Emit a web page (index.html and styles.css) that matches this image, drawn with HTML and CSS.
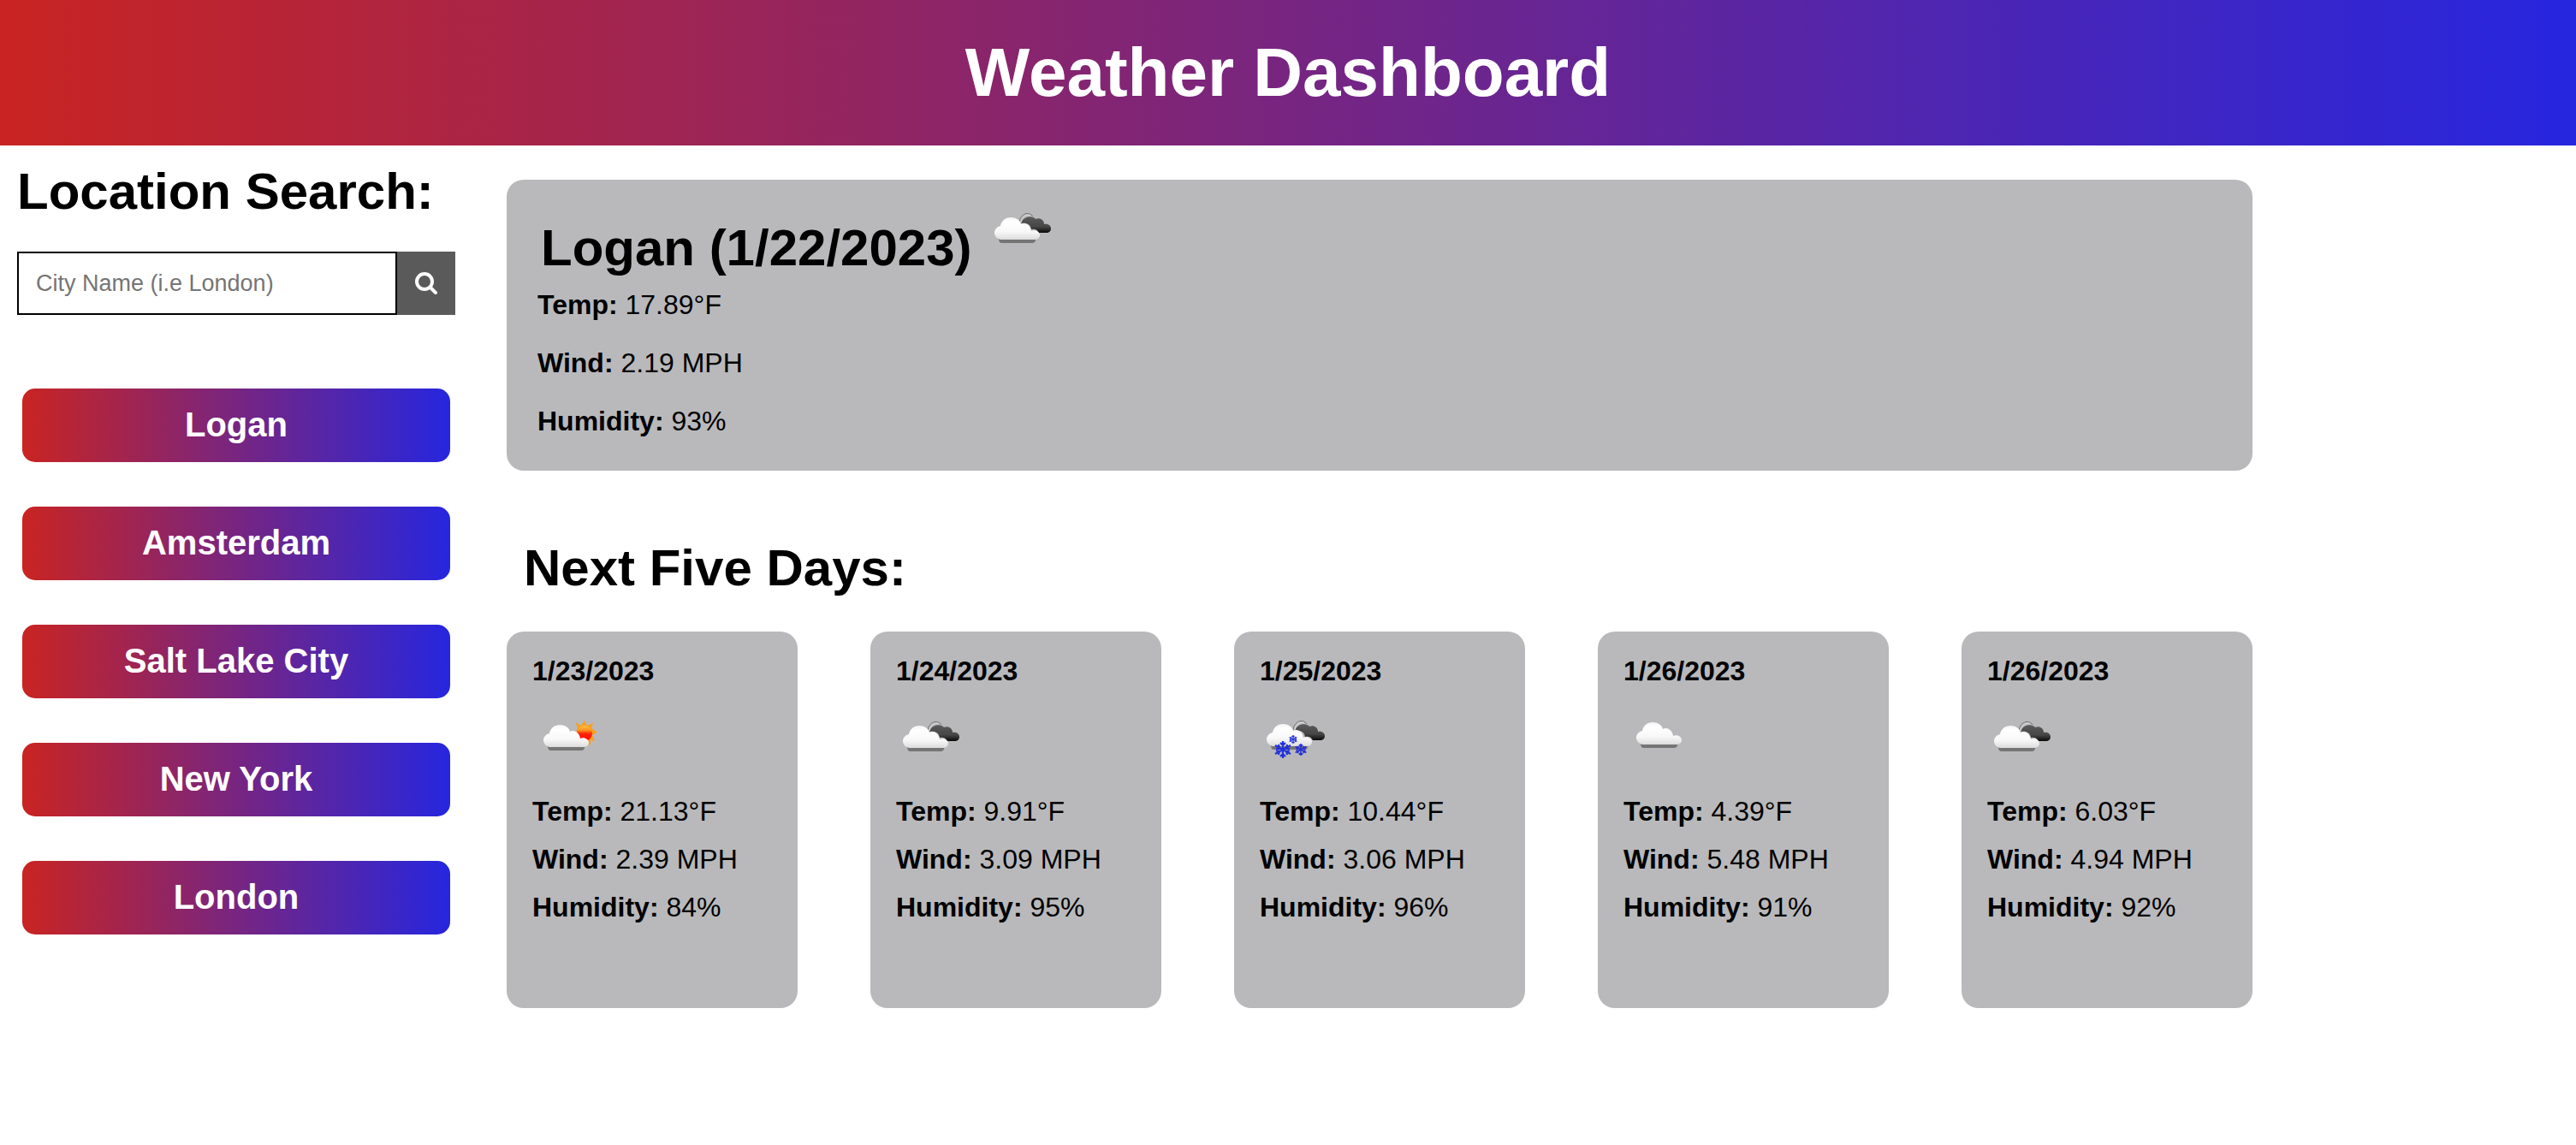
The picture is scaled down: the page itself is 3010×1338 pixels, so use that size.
FILE: index.html
```html
<!DOCTYPE html>
<html lang="en">
<head>
<meta charset="utf-8">
<meta name="viewport" content="width=device-width, initial-scale=1">
<title>Weather Dashboard</title>
<link rel="stylesheet" href="styles.css">
</head>
<body>
<svg class="sprite" aria-hidden="true">
  <defs>
    <linearGradient id="white-fill" x1="0" y1="0" x2="0" y2="1">
      <stop offset="0" stop-color="#f4f4f4"/>
      <stop offset=".2" stop-color="#fff"/>
      <stop offset=".65" stop-color="#f8f8f8"/>
      <stop offset="1" stop-color="#dcdcdc"/>
    </linearGradient>
    <linearGradient id="dark-fill" x1="0" y1="0" x2="0" y2="1">
      <stop offset="0" stop-color="#5a5a5a"/>
      <stop offset=".6" stop-color="#474747"/>
      <stop offset="1" stop-color="#0c0c0c"/>
    </linearGradient>
    <linearGradient id="sun-fill" x1="0" y1="0" x2="0" y2="1">
      <stop offset="0" stop-color="#ffc04a"/>
      <stop offset=".3" stop-color="#ff9020"/>
      <stop offset=".5" stop-color="#ff2a08"/>
      <stop offset="1" stop-color="#f00"/>
    </linearGradient>
    <filter id="soft" x="-10%" y="-10%" width="120%" height="120%">
      <feGaussianBlur stdDeviation=".6"/>
    </filter>
    <g id="white-cloud">
      <path d="M4 24H50L47 30Q46 31 44 31H9Q7 31 6 30Z" fill="#747474"/>
      <path d="M7 27C3 26 0 23 0 19C0 15 3 12 7 11C8 5 13 1 19 1C25 1 30 4 31 9C36 6 42 10 43 17C48 15 53 18 53 22C53 25 50 27 47 27Z" fill="url(#white-fill)"/>
    </g>
    <g id="dark-cloud">
      <path d="M31 12C33 4 44 2 48 7C52 5 58 7 58 13C63 12 66 15 66 18C66 21 64 23 60 23H52C50 19 47 18 43 19C42 13 38 11 31 12Z" fill="url(#dark-fill)"/>
      <path d="M29 11C30 1 40-3 45 4" fill="none" stroke="#727272" stroke-width="1"/>
      <path d="M31 11C32 4 37 1 42 3" fill="none" stroke="#dcdcdc" stroke-width="1"/>
    </g>
    <g id="flake" stroke="#2430d8" stroke-width="2.200" fill="none">
      <path d="M0-10V10M-9-5L9 5M-9 5L9-5M-3-8L0-5L3-8M-3 8L0 5L3 8M-8-1L-4-2L-5-6M8 1L4 2L5 6M-8 1L-4 2L-5 6M8-1L4-2L5-6"/>
    </g>
    <symbol id="broken-clouds" viewBox="0 0 100 100">
      <g filter="url(#soft)">
        <use href="#dark-cloud" transform="translate(8 31)"/>
        <use href="#white-cloud" transform="translate(8 35)"/>
      </g>
    </symbol>
    <symbol id="few-clouds" viewBox="0 0 100 100">
      <g filter="url(#soft)">
        <path d="M61 30L64 36L71 33L69 39L76 44L70 47L73 54L68 53L68 59L55 52L51 44L53 38L50 32L57 36Z" fill="#f9a01f"/>
        <circle cx="61" cy="45" r="9" fill="url(#sun-fill)"/>
        <use href="#white-cloud" transform="translate(13 34)"/>
      </g>
    </symbol>
    <symbol id="scattered-clouds" viewBox="0 0 100 100">
      <use href="#white-cloud" transform="translate(15 31)" filter="url(#soft)"/>
    </symbol>
    <symbol id="snow" viewBox="0 0 100 100">
      <g filter="url(#soft)">
        <use href="#dark-cloud" transform="translate(10 30)"/>
        <use href="#white-cloud" transform="translate(8 33)"/>
        <use href="#flake" transform="translate(27 64)"/>
        <use href="#flake" transform="translate(39 52) scale(.5)"/>
        <use href="#flake" transform="translate(48 64) scale(.7)"/>
      </g>
    </symbol>
  </defs>
</svg>

<header class="banner"><h1>Weather Dashboard</h1></header>

<div class="page">
  <aside class="sidebar">
    <h2><label for="city">Location Search:</label></h2>
    <form class="search">
      <input id="city" type="text" placeholder="City Name (i.e London)">
      <button type="submit" aria-label="Search">
        <svg viewBox="0 0 26 26" aria-hidden="true"><circle cx="11" cy="11" r="9"/><path d="M18 18L24 24"/></svg>
      </button>
    </form>
    <div class="history">
      <button type="button">Logan</button>
      <button type="button">Amsterdam</button>
      <button type="button">Salt Lake City</button>
      <button type="button">New York</button>
      <button type="button">London</button>
    </div>
  </aside>

  <main class="weather">
    <section class="current">
      <div class="current-head">
        <h2>Logan (1/22/2023)</h2>
        <svg class="icon" role="img" aria-label="Broken clouds"><use href="#broken-clouds"/></svg>
      </div>
      <p><b>Temp:</b> 17.89°F</p>
      <p><b>Wind:</b> 2.19 MPH</p>
      <p><b>Humidity:</b> 93%</p>
    </section>

    <h2 class="forecast-title">Next Five Days:</h2>
    <section class="forecast">
      <article class="day">
        <h3>1/23/2023</h3>
        <svg class="icon" role="img" aria-label="Few clouds"><use href="#few-clouds"/></svg>
        <p><b>Temp:</b> 21.13°F</p>
        <p><b>Wind:</b> 2.39 MPH</p>
        <p><b>Humidity:</b> 84%</p>
      </article>
      <article class="day">
        <h3>1/24/2023</h3>
        <svg class="icon" role="img" aria-label="Broken clouds"><use href="#broken-clouds"/></svg>
        <p><b>Temp:</b> 9.91°F</p>
        <p><b>Wind:</b> 3.09 MPH</p>
        <p><b>Humidity:</b> 95%</p>
      </article>
      <article class="day">
        <h3>1/25/2023</h3>
        <svg class="icon" role="img" aria-label="Snow"><use href="#snow"/></svg>
        <p><b>Temp:</b> 10.44°F</p>
        <p><b>Wind:</b> 3.06 MPH</p>
        <p><b>Humidity:</b> 96%</p>
      </article>
      <article class="day">
        <h3>1/26/2023</h3>
        <svg class="icon" role="img" aria-label="Scattered clouds"><use href="#scattered-clouds"/></svg>
        <p><b>Temp:</b> 4.39°F</p>
        <p><b>Wind:</b> 5.48 MPH</p>
        <p><b>Humidity:</b> 91%</p>
      </article>
      <article class="day">
        <h3>1/26/2023</h3>
        <svg class="icon" role="img" aria-label="Broken clouds"><use href="#broken-clouds"/></svg>
        <p><b>Temp:</b> 6.03°F</p>
        <p><b>Wind:</b> 4.94 MPH</p>
        <p><b>Humidity:</b> 92%</p>
      </article>
    </section>
  </main>
</div>
</body>
</html>
```
FILE: styles.css
```css
:root {
  --fade: linear-gradient(90deg, #c92422, #2626df);
  --panel: #b9b9bb;
}

* {
  box-sizing: border-box;
  margin: 0;
}

body {
  font-family: Arial, "Liberation Sans", sans-serif;
  font-size: 32px;
  color: #000;
  background: #fff;
}

.sprite {
  position: absolute;
  width: 0;
  height: 0;
}

.banner {
  padding: 40px;
  background: var(--fade);
  color: #fff;
  text-align: center;
}

h1 {
  font-size: 80px;
  line-height: 90px;
}

h2 {
  font-size: 60px;
  line-height: 68px;
}

.page {
  display: flex;
  align-items: flex-start;
  gap: 60px;
  padding: 20px;
}

.sidebar {
  flex: 0 0 512px;
}

.search {
  display: flex;
  height: 74px;
  margin-top: 36px;
}

.search input {
  flex: 1;
  min-width: 0;
  padding: 0 20px;
  border: 2px solid #000;
  border-radius: 0;
  font: inherit;
  font-size: 27px;
}

.search input::placeholder {
  color: #757575;
}

.search button {
  display: grid;
  place-items: center;
  width: 68px;
  padding: 0;
  border: 0;
  background: #5a5a5a;
}

.search svg {
  width: 26px;
  height: 26px;
  fill: none;
  stroke: #fff;
  stroke-width: 4;
  stroke-linecap: round;
  overflow: visible;
}

.history {
  display: grid;
  gap: 52px;
  margin: 86px 6px 0;
}

.history button {
  height: 86px;
  padding: 0 0 2px;
  border: 0;
  border-radius: 15px;
  background: var(--fade);
  color: #fff;
  font: inherit;
  font-size: 40px;
  font-weight: bold;
}

.weather {
  flex: 0 1 2040px;
  margin-top: 20px;
}

.current {
  padding: 20px 36px 24px;
  border-radius: 20px;
  background: var(--panel);
}

.current-head {
  display: flex;
  align-items: flex-start;
  height: 92px;
  padding-left: 4px;
}

.current-head h2 {
  padding-top: 26px;
}

.current-head .icon {
  margin: -12px 0 0 18px;
}

.icon {
  display: block;
  width: 100px;
  height: 100px;
}

.current p {
  line-height: 68px;
}

.forecast-title {
  padding: 80px 20px 40px;
}

.forecast {
  display: flex;
  justify-content: space-between;
  gap: 20px;
}

.day {
  flex: 0 1 340px;
  min-height: 440px;
  padding: 28px 30px;
  border-radius: 20px;
  background: var(--panel);
}

.day h3 {
  font-size: 32px;
  line-height: 36px;
}

.day p {
  line-height: 56px;
}

.day .icon {
  margin: 10px 0 8px;
}
```
